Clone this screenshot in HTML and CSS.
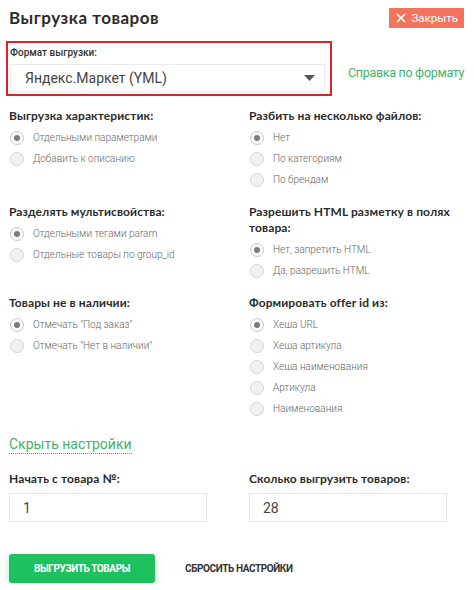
FILE: index.html
```html
<!DOCTYPE html>
<html lang="ru">
<head>
<meta charset="utf-8">
<title>Выгрузка товаров</title>
<link rel="stylesheet" href="styles.css">
</head>
<body>
<div class="page">
  <header class="header">
    <h1 class="title">Выгрузка товаров</h1>
    <button class="close-btn" type="button">
      <svg class="close-icon" width="10" height="10" viewBox="0 0 10 10"><path d="M1 1L9 9M9 1L1 9" stroke="#fff" stroke-width="1.7" fill="none"/></svg>
      <span>Закрыть</span>
    </button>
  </header>

  <div class="format-row">
    <div class="format-box">
      <div class="format-label">Формат выгрузки:</div>
      <div class="select">
        <span>Яндекс.Маркет (YML)</span>
        <svg class="caret" width="11" height="6" viewBox="0 0 11 6"><path d="M0 0H11L5.5 6Z" fill="#555"/></svg>
      </div>
    </div>
    <a class="help-link" href="#">Справка по формату</a>
  </div>

  <div class="options">
    <section class="group">
      <h3 class="group-title">Выгрузка характеристик:</h3>
      <label class="radio"><span class="dot checked"></span>Отдельными параметрами</label>
      <label class="radio"><span class="dot"></span>Добавить к описанию</label>
    </section>
    <section class="group">
      <h3 class="group-title">Разбить на несколько файлов:</h3>
      <label class="radio"><span class="dot checked"></span>Нет</label>
      <label class="radio"><span class="dot"></span>По категориям</label>
      <label class="radio"><span class="dot"></span>По брендам</label>
    </section>
    <section class="group">
      <h3 class="group-title">Разделять мультисвойства:</h3>
      <label class="radio"><span class="dot checked"></span>Отдельными тегами param</label>
      <label class="radio"><span class="dot"></span>Отдельные товары по group_id</label>
    </section>
    <section class="group">
      <h3 class="group-title two-line">Разрешить HTML разметку в полях товара:</h3>
      <label class="radio"><span class="dot checked"></span>Нет, запретить HTML</label>
      <label class="radio"><span class="dot"></span>Да, разрешить HTML</label>
    </section>
    <section class="group">
      <h3 class="group-title">Товары не в наличии:</h3>
      <label class="radio"><span class="dot checked"></span>Отмечать "Под заказ"</label>
      <label class="radio"><span class="dot"></span>Отмечать "Нет в наличии"</label>
    </section>
    <section class="group">
      <h3 class="group-title">Формировать offer id из:</h3>
      <label class="radio"><span class="dot checked"></span>Хеша URL</label>
      <label class="radio"><span class="dot"></span>Хеша артикула</label>
      <label class="radio"><span class="dot"></span>Хеша наименования</label>
      <label class="radio"><span class="dot"></span>Артикула</label>
      <label class="radio"><span class="dot"></span>Наименования</label>
    </section>
  </div>

  <a class="toggle-link" href="#">Скрыть настройки</a>

  <div class="fields">
    <div class="field">
      <h3 class="group-title">Начать с товара №:</h3>
      <div class="input">1</div>
    </div>
    <div class="field">
      <h3 class="group-title">Сколько выгрузить товаров:</h3>
      <div class="input">28</div>
    </div>
  </div>

  <div class="actions">
    <button class="primary-btn" type="button">ВЫГРУЗИТЬ ТОВАРЫ</button>
    <button class="reset-btn" type="button">СБРОСИТЬ НАСТРОЙКИ</button>
  </div>
</div>
</body>
</html>
```
FILE: styles.css
```css
* { box-sizing: border-box; }
html, body { margin: 0; padding: 0; background: #fff; }
body { font-family: Roboto, "Liberation Sans", sans-serif; color: #333; }

.page { padding: 0 10px 0 9px; width: 474px; }

.header {
  display: flex;
  align-items: center;
  justify-content: space-between;
  height: 34px;
  padding-top: 1px;
}
.title {
  margin: 0;
  font-family: Lato, "Noto Sans", sans-serif;
  font-weight: 700;
  font-size: 17px;
  letter-spacing: 0.5px;
  color: #2b2b2b;
}
.close-btn {
  display: flex;
  align-items: center;
  gap: 6px;
  height: 20px;
  padding: 0 6px 0 7px;
  border: 0;
  border-radius: 1px;
  background: #f3745d;
  color: #fff;
  font-family: Roboto, sans-serif;
  font-size: 11.5px;
}

.format-row {
  display: flex;
  align-items: center;
  margin-top: 7px;
  margin-left: -3px;
  white-space: nowrap;
}
.format-box {
  flex: none;
  width: 326px;
  height: 55px;
  border: 2px solid #e3202a;
  padding: 3px 5px 0 1px;
}
.format-label {
  font-family: Roboto, sans-serif;
  font-size: 10px;
  font-weight: 500;
  color: #333;
  line-height: 14px;
  margin-left: 1px;
}
.select {
  display: flex;
  align-items: center;
  justify-content: space-between;
  height: 28px;
  margin-top: 4px;
  margin-left: 1px;
  border: 1px solid #ebebeb;
  padding: 0 9px 0 14px;
  font-size: 14px;
  color: #444;
}
.help-link {
  flex: none;
  margin-left: 16px;
  color: #3fb36c;
  font-size: 12.5px;
  letter-spacing: -0.3px;
  text-decoration: none;
  padding-top: 8px;
}

.options {
  display: grid;
  grid-template-columns: 240px 1fr;
  row-gap: 14px;
  margin-top: 12px;
}
.group { display: flex; flex-direction: column; }
.group-title {
  margin: 0 0 3px;
  font-family: Lato, "Noto Sans", sans-serif;
  font-weight: 700;
  font-size: 12px;
  letter-spacing: 0.1px;
  line-height: 16px;
  color: #2b2b2b;
}
.two-line { width: 205px; }
.radio {
  display: flex;
  align-items: center;
  height: 21px;
  font-family: Roboto, sans-serif;
  font-weight: 300;
  font-size: 10px;
  color: #666;
}
.dot {
  width: 14px;
  height: 14px;
  border-radius: 50%;
  border: 1px solid #d5d5d5;
  background: #f1f1f1;
  margin-right: 9px;
  margin-left: 1px;
  display: flex;
  align-items: center;
  justify-content: center;
}
.dot.checked { background: #fafafa; border-color: #c8c8c8; }
.dot.checked::after {
  content: "";
  width: 6px;
  height: 6px;
  border-radius: 50%;
  background: #7a7a7a;
}

.toggle-link {
  display: inline-block;
  margin-top: 17px;
  color: #3fb36c;
  font-size: 14px;
  line-height: 17px;
  text-decoration: none;
  border-bottom: 1px dotted #3fb36c;
}

.fields {
  display: grid;
  grid-template-columns: 240px 1fr;
  margin-top: 17px;
}
.field .group-title { margin-bottom: 6px; }
.input {
  width: 198px;
  height: 29px;
  border: 1px solid #e6e6e6;
  padding: 6px 13px;
  font-size: 14px;
  line-height: 17px;
  color: #444;
}

.actions {
  display: flex;
  align-items: center;
  margin-top: 32px;
}
.primary-btn {
  width: 146px;
  height: 29px;
  border: 0;
  border-radius: 3px;
  background: #1dc25e;
  color: #fff;
  font-family: Roboto, sans-serif;
  font-weight: 700;
  font-size: 10px;
  letter-spacing: -0.4px;
  box-shadow: 0 3px 8px rgba(29, 194, 94, 0.3);
}
.reset-btn {
  margin-left: 30px;
  border: 0;
  background: none;
  padding: 0;
  color: #333;
  font-family: Roboto, sans-serif;
  font-weight: 700;
  font-size: 10px;
  letter-spacing: -0.4px;
}
```
